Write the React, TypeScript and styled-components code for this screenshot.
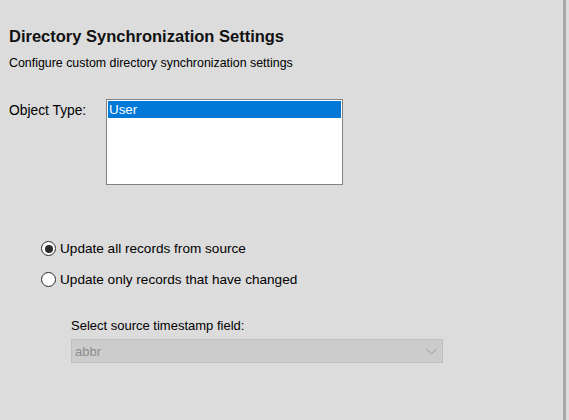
import React, { useState } from 'react';
import styled, { createGlobalStyle } from 'styled-components';

const Global = createGlobalStyle`
  html, body {
    margin: 0;
    padding: 0;
    background: #dcdcdc;
  }
  body {
    font-family: "Liberation Sans", Arial, sans-serif;
    color: #000;
  }
`;

const Page = styled.div`
  width: 566px;
  height: 420px;
  box-sizing: border-box;
  border-right: 3px solid #a8a8a8;
  padding: 26px 0 0 9px;
  background: #dcdcdc;
`;

const Title = styled.h1`
  margin: 0;
  font-size: 16.5px;
  font-weight: bold;
  line-height: 20px;
  color: #111;
`;

const Subtitle = styled.p`
  margin: 9px 0 0;
  font-size: 12.4px;
  line-height: 16px;
`;

const FieldRow = styled.div`
  display: flex;
  margin-top: 28px;
`;

const FieldLabel = styled.label`
  width: 97px;
  font-size: 13.8px;
  line-height: 16px;
  padding-top: 4px;
`;

const ListBox = styled.div`
  width: 237px;
  height: 86px;
  box-sizing: border-box;
  background: #fff;
  border: 1px solid #828282;
  padding: 1px;
`;

const ListItem = styled.div<{ selected?: boolean }>`
  height: 17px;
  line-height: 17px;
  font-size: 13.4px;
  padding-left: 1px;
  background: ${({ selected }) => (selected ? '#0078d7' : 'transparent')};
  color: ${({ selected }) => (selected ? '#fff' : '#000')};
`;

const Options = styled.div`
  display: flex;
  flex-direction: column;
  gap: 12px;
  margin: 54px 0 0 32px;
`;

const RadioRow = styled.label`
  display: flex;
  align-items: center;
  gap: 4px;
  font-size: 13.6px;
  line-height: 19px;
  cursor: default;
`;

const RadioCircle = styled.span<{ checked?: boolean }>`
  width: 15px;
  height: 15px;
  box-sizing: border-box;
  border-radius: 50%;
  border: 1.3px solid #2b2b2b;
  background: #fff;
  display: flex;
  align-items: center;
  justify-content: center;
  &::after {
    content: '';
    width: 8px;
    height: 8px;
    border-radius: 50%;
    background: ${({ checked }) => (checked ? '#2b2b2b' : 'transparent')};
  }
`;

const SubField = styled.div`
  margin: 29px 0 0 62px;
`;

const SubLabel = styled.div`
  font-size: 13px;
  line-height: 16px;
`;

const Dropdown = styled.div`
  margin-top: 5px;
  width: 372px;
  height: 24px;
  box-sizing: border-box;
  background: #cccccc;
  border: 1px solid #bfbfbf;
  display: flex;
  align-items: center;
  justify-content: space-between;
  padding: 0 5px 0 3px;
  font-size: 13px;
  color: #8c8c8c;
`;

const App = () => {
  const [mode, setMode] = useState('all');

  return (
    <>
      <Global />
      <Page>
        <Title>Directory Synchronization Settings</Title>
        <Subtitle>Configure custom directory synchronization settings</Subtitle>
        <FieldRow>
          <FieldLabel>Object Type:</FieldLabel>
          <ListBox>
            <ListItem selected>User</ListItem>
          </ListBox>
        </FieldRow>
        <Options>
          <RadioRow onClick={() => setMode('all')}>
            <RadioCircle checked={mode === 'all'} />
            Update all records from source
          </RadioRow>
          <RadioRow onClick={() => setMode('changed')}>
            <RadioCircle checked={mode === 'changed'} />
            Update only records that have changed
          </RadioRow>
        </Options>
        <SubField>
          <SubLabel>Select source timestamp field:</SubLabel>
          <Dropdown>
            <span>abbr</span>
            <svg width="11" height="7" viewBox="0 0 11 7">
              <path d="M0.5 0.8 L5.5 5.8 L10.5 0.8" fill="none" stroke="#a6a6a6" strokeWidth="1.1" />
            </svg>
          </Dropdown>
        </SubField>
      </Page>
    </>
  );
};

export default App;
